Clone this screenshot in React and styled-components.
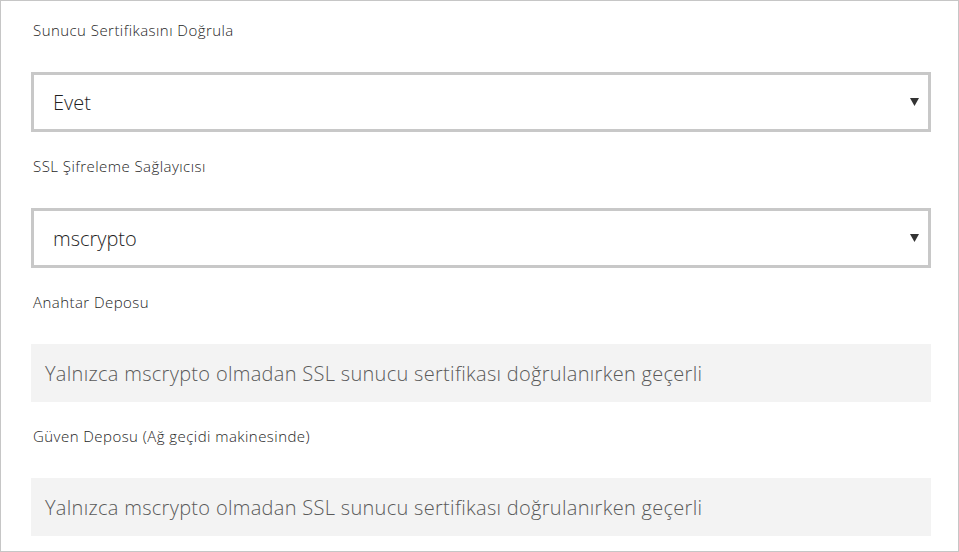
import React from "react";
import styled, { createGlobalStyle } from "styled-components";

const Global = createGlobalStyle`
  html, body { margin: 0; padding: 0; background: #fff; }
  body { font-family: "Open Sans", "Noto Sans", sans-serif; }
  * { box-sizing: border-box; }
`;

const Panel = styled.div`
  width: 959px;
  height: 552px;
  border: 1px solid #c6c6c6;
  padding: 19px 26px 0 30px;
  display: flex;
  flex-direction: column;
  overflow: hidden;
`;

const Field = styled.div`
  display: flex;
  flex-direction: column;
  margin-bottom: 24px;
`;

const Label = styled.div`
  font-size: 15px;
  font-weight: 300;
  letter-spacing: 0.45px;
  line-height: 20px;
  height: 20px;
  color: #1e1e1e;
  padding-left: 2px;
  margin-bottom: 32px;
`;

const Select = styled.div`
  width: 900px;
  height: 60px;
  border: 3px solid #c8c8c8;
  display: flex;
  align-items: center;
  justify-content: space-between;
  padding: 0 9px 0 19px;
  font-size: 20px;
  font-weight: 300;
  color: #1f1f1f;
`;

const Arrow = styled.svg`
  width: 9px;
  height: 8px;
  flex: none;
`;

const ReadOnly = styled.div`
  width: 900px;
  height: 58px;
  background: #f3f3f3;
  display: flex;
  align-items: center;
  padding: 0 14px;
  font-size: 20px;
  font-weight: 300;
  letter-spacing: 0.3px;
  color: #5a5a5a;
`;

const Caret = () => (
  <Arrow viewBox="0 0 9 8">
    <polygon points="0,0 9,0 4.5,8" fill="#333" />
  </Arrow>
);

const hint = "Yalnızca mscrypto olmadan SSL sunucu sertifikası doğrulanırken geçerli";

export default function App() {
  return (
    <>
      <Global />
      <Panel>
        <Field>
          <Label>Sunucu Sertifikasını Doğrula</Label>
          <Select>
            <span>Evet</span>
            <Caret />
          </Select>
        </Field>
        <Field>
          <Label>SSL Şifreleme Sağlayıcısı</Label>
          <Select>
            <span>mscrypto</span>
            <Caret />
          </Select>
        </Field>
        <Field>
          <Label>Anahtar Deposu</Label>
          <ReadOnly>{hint}</ReadOnly>
        </Field>
        <Field>
          <Label>Güven Deposu (Ağ geçidi makinesinde)</Label>
          <ReadOnly>{hint}</ReadOnly>
        </Field>
      </Panel>
    </>
  );
}
